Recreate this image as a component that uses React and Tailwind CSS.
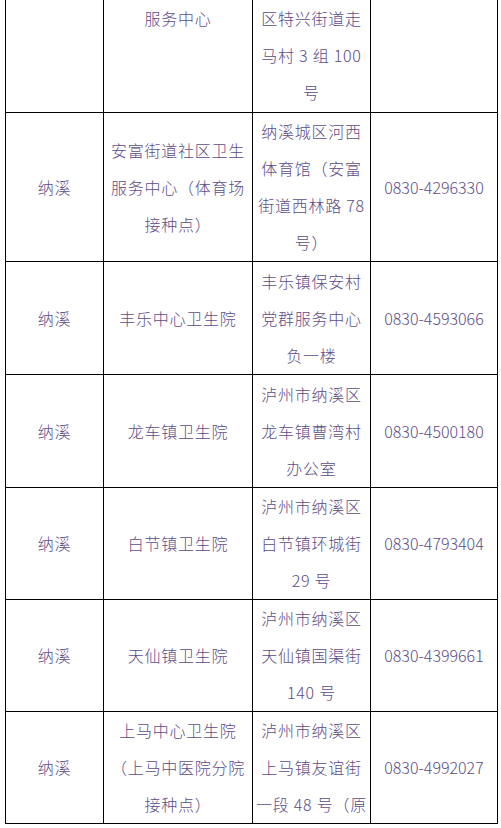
import React from "react";

const rows = [
  { h: "h-[113px]", top: true, c1: "", c2: ["服务中心"], c3: ["区特兴街道走", "马村 3 组 100", "号"], c4: "" },
  { h: "h-[149px]", c1: "纳溪", c2: ["安富街道社区卫生", "服务中心（体育场", "接种点）"], c3: ["纳溪城区河西", "体育馆（安富", "街道西林路 78", "号）"], c4: "0830-4296330" },
  { h: "h-[113px]", c1: "纳溪", c2: ["丰乐中心卫生院"], c3: ["丰乐镇保安村", "党群服务中心", "负一楼"], c4: "0830-4593066" },
  { h: "h-[113px]", c1: "纳溪", c2: ["龙车镇卫生院"], c3: ["泸州市纳溪区", "龙车镇曹湾村", "办公室"], c4: "0830-4500180" },
  { h: "h-[112px]", c1: "纳溪", c2: ["白节镇卫生院"], c3: ["泸州市纳溪区", "白节镇环城街", "29 号"], c4: "0830-4793404" },
  { h: "h-[112px]", c1: "纳溪", c2: ["天仙镇卫生院"], c3: ["泸州市纳溪区", "天仙镇国渠街", "140 号"], c4: "0830-4399661" },
  { h: "h-[111px]", last: true, c1: "纳溪", c2: ["上马中心卫生院", "（上马中医院分院", "接种点）"], c3: ["泸州市纳溪区", "上马镇友谊街", "一段 48 号（原"], c4: "0830-4992027" },
];

function Lines({ lines }) {
  return (
    <div className="flex flex-col items-center">
      {lines.map((l, i) => (
        <div key={i} className="whitespace-nowrap">{l}</div>
      ))}
    </div>
  );
}

export default function App() {
  return (
    <div className="w-[501px] h-[828px] bg-white overflow-hidden">
      <div
        className="ml-[5px] w-[493px] flex flex-col text-[16px] leading-[37px] tracking-[0.75px] font-light text-[#5c4c88]"
        style={{ fontFamily: '"Noto Sans CJK SC", "Noto Sans", sans-serif' }}
      >
        {rows.map((r, i) => (
          <div key={i} className={`grid grid-cols-[98px_149px_118px_128px] ${r.h}`}>
            <div className="border-l border-b border-black flex items-center justify-center">
              {r.c1}
            </div>
            <div className={`border-l border-b border-black flex flex-col items-center text-center ${r.top ? "justify-start" : "justify-center"}`}>
              <Lines lines={r.c2} />
            </div>
            <div className={`border-l border-b border-black flex flex-col items-center text-center overflow-hidden ${r.top || r.last ? "justify-start" : "justify-center"}`}>
              <Lines lines={r.c3} />
            </div>
            <div className="border-l border-r border-b border-black flex items-center justify-center tracking-normal">
              {r.c4}
            </div>
          </div>
        ))}
      </div>
    </div>
  );
}
